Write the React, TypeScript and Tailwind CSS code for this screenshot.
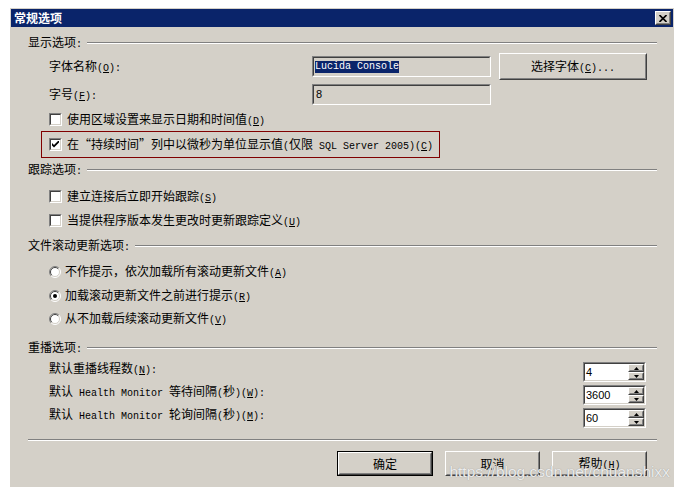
import React from "react";

type Kids = { children?: React.ReactNode };

// SimSun-like half-width latin: 6px advance
const L = ({ children }: Kids) => (
	<span className="font-['Liberation_Mono',monospace] text-[10px]">{children}</span>
);

const Sunken = ({
	className,
	inner,
	children,
}: Kids & { className: string; inner: string }) => (
	<div className={`border border-t-[#808080] border-l-[#808080] border-b-white border-r-white ${className}`}>
		<div className={`h-full w-full border border-t-[#404040] border-l-[#404040] border-b-[#d4d0c8] border-r-[#d4d0c8] ${inner}`}>
			{children}
		</div>
	</div>
);

const Raised = ({ className, children }: Kids & { className: string }) => (
	<div className={`border border-t-white border-l-white border-b-[#404040] border-r-[#404040] bg-[#d4d0c8] ${className}`}>
		<div className="flex h-full w-full items-center justify-center border border-t-[#d4d0c8] border-l-[#d4d0c8] border-b-[#808080] border-r-[#808080]">
			{children}
		</div>
	</div>
);

const Header = ({ className, children }: Kids & { className: string }) => (
	<div className={`flex h-[14px] items-center ${className}`}>
		<span className="leading-[14px]">{children}</span>
		<div className="ml-[5px] h-[2px] flex-1 border-t border-b border-t-[#808080] border-b-white" />
	</div>
);

const Checkbox = ({ checked }: { checked?: boolean }) => (
	<Sunken className="h-[13px] w-[13px] shrink-0" inner="flex items-center justify-center bg-white">
		{checked && (
			<svg width="7" height="7" viewBox="0 0 7 7">
				<path d="M0 2 L2 4 L7 -1 L7 1.6 L2 6.6 L0 4.6 Z" fill="black" />
			</svg>
		)}
	</Sunken>
);

const Radio = ({ checked }: { checked?: boolean }) => (
	<svg width="12" height="12" viewBox="0 0 12 12" className="shrink-0">
		<circle cx="6" cy="6" r="5" fill="white" />
		<path d="M2.1 9.9 A5.5 5.5 0 0 1 9.9 2.1" fill="none" stroke="#808080" />
		<path d="M9.9 2.1 A5.5 5.5 0 0 1 2.1 9.9" fill="none" stroke="white" />
		<path d="M2.8 9.2 A4.5 4.5 0 0 1 9.2 2.8" fill="none" stroke="#404040" />
		<path d="M9.2 2.8 A4.5 4.5 0 0 1 2.8 9.2" fill="none" stroke="#d4d0c8" />
		{checked && <circle cx="6" cy="6" r="2" fill="black" />}
	</svg>
);

const CheckRow = ({ className, checked, children }: Kids & { className: string; checked?: boolean }) => (
	<div className={`flex h-[13px] items-center pl-[21px] ${className}`}>
		<Checkbox checked={checked} />
		<span className="ml-[5px] whitespace-nowrap leading-[13px]">{children}</span>
	</div>
);

const RadioRow = ({ className, checked, children }: Kids & { className: string; checked?: boolean }) => (
	<div className={`flex h-[13px] items-center pl-[21px] ${className}`}>
		<Radio checked={checked} />
		<span className="ml-[4px] whitespace-nowrap leading-[13px]">{children}</span>
	</div>
);

const Spinner = ({ value }: { value: string }) => (
	<Sunken className="h-[20px] w-[63px]" inner="flex items-center bg-white">
		<span className="flex-1 pl-[1px] font-['Liberation_Sans',sans-serif] text-[11px] leading-none">
			{value}
		</span>
		<div className="flex h-full w-[16px] flex-col">
			<Raised className="flex-1">
				<svg width="5" height="3" viewBox="0 0 5 3">
					<path d="M2.5 0 L5 3 L0 3 Z" fill="black" />
				</svg>
			</Raised>
			<Raised className="flex-1">
				<svg width="5" height="3" viewBox="0 0 5 3">
					<path d="M0 0 L5 0 L2.5 3 Z" fill="black" />
				</svg>
			</Raised>
		</div>
	</Sunken>
);

const SpinRow = ({ className, value, children }: Kids & { className: string; value: string }) => (
	<div className={`flex h-[20px] items-start pl-[21px] ${className}`}>
		<span className="w-[534px] whitespace-nowrap leading-[12px]">{children}</span>
		<Spinner value={value} />
	</div>
);

export default function App() {
	return (
		<div className="relative h-[495px] w-[682px] overflow-hidden bg-white pl-[10px] pt-[8px] font-['Noto_Sans_CJK_SC',sans-serif] text-[12px] text-black">
			<div className="flex h-[479px] w-[664px] flex-col border border-[#d4d0c8] bg-[#d4d0c8]">
				{/* Title bar */}
				<div className="flex h-[18px] items-center justify-between bg-[#0a246a] pl-[3px] pr-[2px]">
					<span className="font-bold leading-none text-white">常规选项</span>
					<Raised className="h-[14px] w-[16px]">
						<svg width="8" height="7" viewBox="0 0 8 7">
							<path d="M0.5 0 L7.5 7 M7.5 0 L0.5 7" stroke="black" strokeWidth="1.6" />
						</svg>
					</Raised>
				</div>

				<div className="flex flex-col pl-[17px] pr-[16px]">
					<Header className="mt-[9px]">
						显示选项<L>:</L>
					</Header>

					<div className="mt-[3px] flex h-[27px] items-center pl-[21px]">
						<span className="w-[263px] whitespace-nowrap">
							字体名称<L>(<u>O</u>):</L>
						</span>
						<Sunken className="h-[21px] w-[179px]" inner="flex items-center bg-[#d4d0c8] pl-[1px]">
							<span className="bg-[#0a246a] font-['Liberation_Mono',monospace] text-[10px] leading-[12px] text-white">
								Lucida Console
							</span>
						</Sunken>
						<Raised className="ml-[8px] h-[27px] w-[148px]">
							<span className="whitespace-nowrap">
								选择字体<L>(<u>C</u>)...</L>
							</span>
						</Raised>
					</div>

					<div className="mt-[4px] flex h-[21px] items-center pl-[21px]">
						<span className="w-[263px] whitespace-nowrap">
							字号<L>(<u>F</u>):</L>
						</span>
						<Sunken className="h-[21px] w-[179px]" inner="flex items-center bg-[#d4d0c8] pl-[2px]">
							<span className="font-['Liberation_Sans',sans-serif] text-[11px] leading-none">8</span>
						</Sunken>
					</div>

					<CheckRow className="mt-[8px]">
						使用区域设置来显示日期和时间值<L>(<u>D</u>)</L>
					</CheckRow>

					<div className="mt-[5px] ml-[13px] flex h-[27px] w-[399px] items-center border border-[#800000] pl-[7px]">
						<Checkbox checked />
						<span className="ml-[5px] whitespace-nowrap leading-[13px]">
							在“持续时间”列中以微秒为单位显示值<L>(</L>仅限<L> SQL Server 2005)(<u>C</u>)</L>
						</span>
					</div>

					<Header className="mt-[5px]">
						跟踪选项<L>:</L>
					</Header>
					<CheckRow className="mt-[13px]">
						建立连接后立即开始跟踪<L>(<u>S</u>)</L>
					</CheckRow>
					<CheckRow className="mt-[11px]">
						当提供程序版本发生更改时更新跟踪定义<L>(<u>U</u>)</L>
					</CheckRow>

					<Header className="mt-[12px]">
						文件滚动更新选项<L>:</L>
					</Header>
					<RadioRow className="mt-[12px]">
						不作提示，依次加载所有滚动更新文件<L>(<u>A</u>)</L>
					</RadioRow>
					<RadioRow className="mt-[11px]" checked>
						加载滚动更新文件之前进行提示<L>(<u>R</u>)</L>
					</RadioRow>
					<RadioRow className="mt-[10px]">
						从不加载后续滚动更新文件<L>(<u>V</u>)</L>
					</RadioRow>

					<Header className="mt-[16px]">
						重播选项<L>:</L>
					</Header>
					<SpinRow className="mt-[7px]" value="4">
						默认重播线程数<L>(<u>N</u>):</L>
					</SpinRow>
					<SpinRow className="mt-[3px]" value="3600">
						默认<L> Health Monitor </L>等待间隔<L>(</L>秒<L>)(<u>W</u>):</L>
					</SpinRow>
					<SpinRow className="mt-[3px]" value="60">
						默认<L> Health Monitor </L>轮询间隔<L>(</L>秒<L>)(<u>M</u>):</L>
					</SpinRow>

					<div className="mt-[11px] h-[2px] border-t border-b border-t-[#808080] border-b-white" />

					<div className="mt-[10px] flex justify-end gap-[12px] pr-[10px]">
						<div className="h-[25px] w-[96px] border border-black">
							<Raised className="h-full w-full">确定</Raised>
						</div>
						<Raised className="h-[25px] w-[95px]">取消</Raised>
						<Raised className="h-[25px] w-[95px]">
							<span className="whitespace-nowrap">
								帮助<L>(<u>H</u>)</L>
							</span>
						</Raised>
					</div>
				</div>
			</div>

			{/* watermark */}
			<div className="absolute right-[12px] top-[464px] font-['Liberation_Sans',sans-serif] text-[15.5px] leading-none text-[#ececec] [text-shadow:0_0_1px_#8a8a8a]">
				https://blog.csdn.net/chuanshixx
			</div>
		</div>
	);
}
